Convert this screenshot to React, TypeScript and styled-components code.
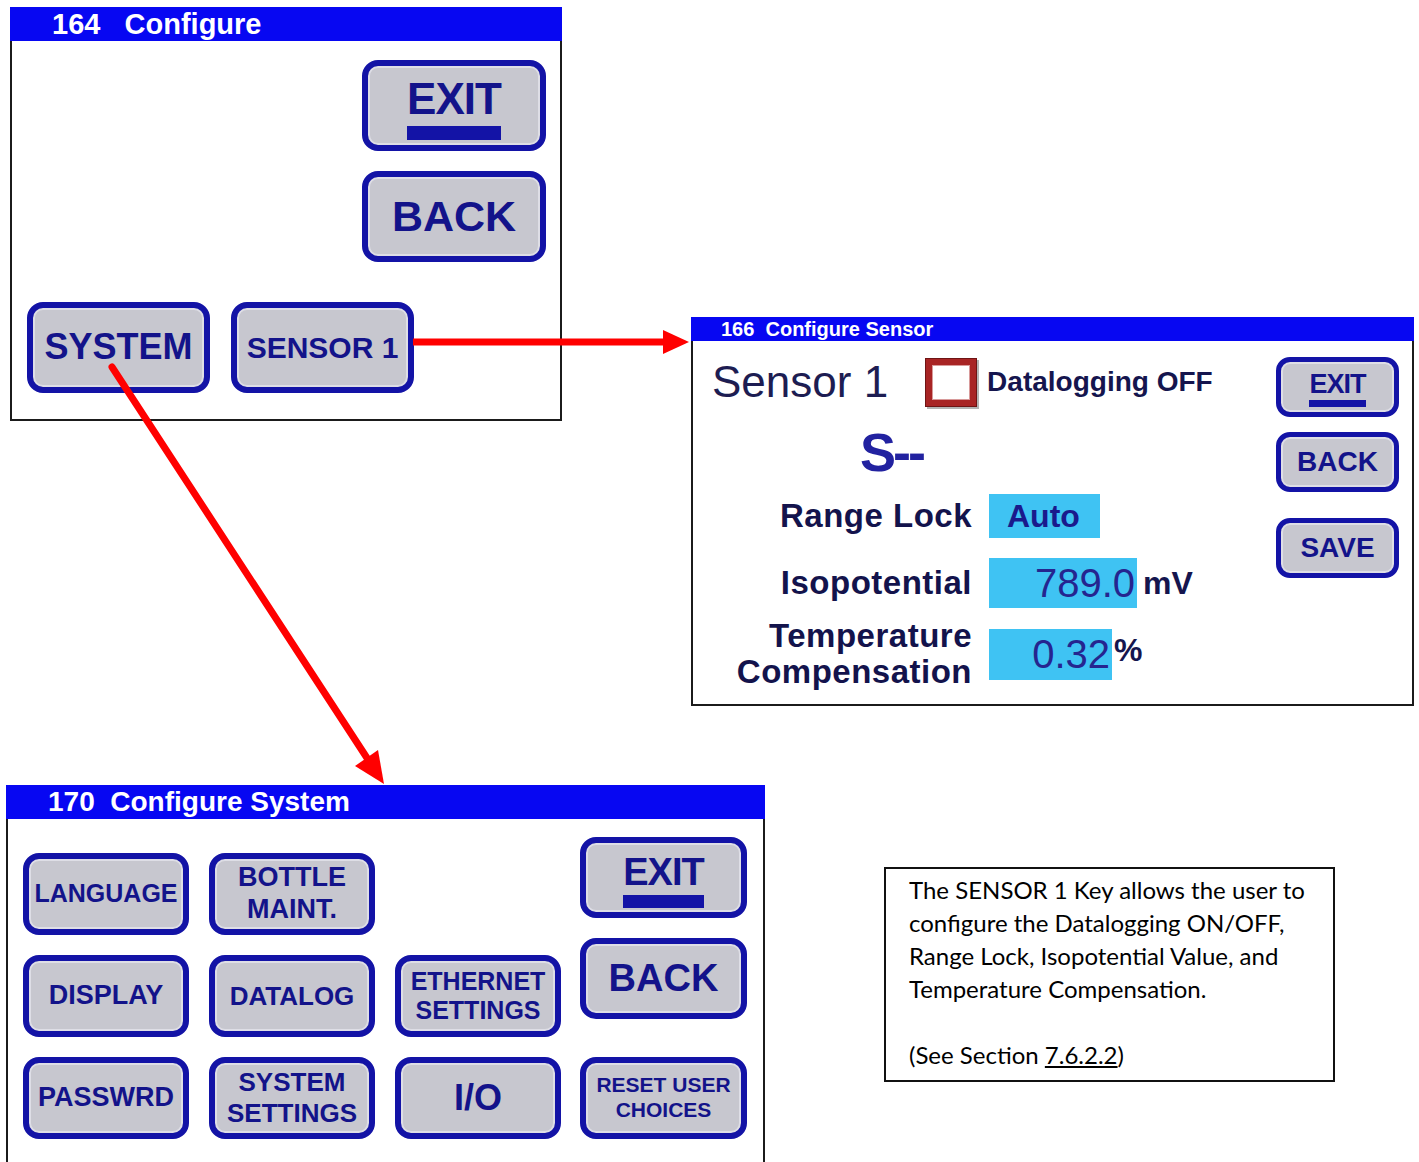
import React from 'react';
import styled, { createGlobalStyle } from 'styled-components';

const GlobalStyle = createGlobalStyle`
  html, body {
    margin: 0;
    padding: 0;
    background: #fff;
    overflow: hidden;
  }
  * {
    box-sizing: border-box;
  }
`;

const Canvas = styled.div`
  position: relative;
  width: 1419px;
  height: 1162px;
  overflow: hidden;
  background: #fff;
  font-family: "Liberation Sans", Arial, sans-serif;
`;

interface PlaceProps {
  $x: number;
  $y: number;
  $w: number;
  $h: number;
}

// each screen is a node of the diagram, so it sits at its own spot on the canvas
const Screen = styled.section<PlaceProps>`
  position: absolute;
  left: ${(p) => p.$x}px;
  top: ${(p) => p.$y}px;
  width: ${(p) => p.$w}px;
  height: ${(p) => p.$h}px;
  border: 2px solid #1b1b1b;
  background: #fff;
  display: flex;
  flex-direction: column;
`;

interface TitleProps {
  $h: number;
  $fs: number;
  $pl: number;
}

const TitleBar = styled.header<TitleProps>`
  flex: none;
  height: ${(p) => p.$h}px;
  margin: -2px -2px 0;
  padding-left: ${(p) => p.$pl}px;
  background: #0707f2;
  color: #fff;
  font-weight: bold;
  font-size: ${(p) => p.$fs}px;
  line-height: ${(p) => p.$h}px;
  white-space: pre;
`;

interface KeyProps {
  $w: number;
  $h: number;
  $fs: number;
  $bw?: number;
  $r?: number;
}

const Key = styled.div<KeyProps>`
  flex: none;
  width: ${(p) => p.$w}px;
  height: ${(p) => p.$h}px;
  border: ${(p) => p.$bw ?? 6}px solid #1313a6;
  border-radius: ${(p) => p.$r ?? 16}px;
  background: #c7c7cf;
  box-shadow: inset 0 0 0 2px #dedee6;
  display: flex;
  flex-direction: column;
  align-items: center;
  justify-content: center;
  color: #13138a;
  font-weight: bold;
  font-size: ${(p) => p.$fs}px;
  line-height: 1.18;
  text-align: center;
  white-space: pre-line;
`;

interface ExitProps {
  $bar: number;
  $gap: number;
  $shift?: number;
}

const ExitLabel = styled.span<ExitProps>`
  display: inline-flex;
  flex-direction: column;
  align-items: stretch;
  line-height: 1;
  letter-spacing: -1px;
  margin-top: ${(p) => (p.$shift ?? 0) * 2}px;

  &::after {
    content: '';
    height: ${(p) => p.$bar}px;
    margin-top: ${(p) => p.$gap}px;
    background: #1313a6;
  }
`;

/* ---------- 164 Configure ---------- */

const ConfigureBody = styled.div`
  flex: 1;
  display: flex;
  flex-direction: column;
  padding: 19px 14px 26px 15px;
`;

const RightRow = styled.div<{ $mt?: number }>`
  display: flex;
  justify-content: flex-end;
  margin-top: ${(p) => p.$mt ?? 0}px;
`;

const BottomRow = styled.div`
  display: flex;
  gap: 21px;
  margin-top: auto;
`;

/* ---------- 166 Configure Sensor ---------- */

const SensorBody = styled.div`
  flex: 1;
  display: flex;
  padding: 16px 13px 0 19px;
`;

const SensorMain = styled.div`
  flex: 1;
  display: flex;
  flex-direction: column;
`;

const HeaderRow = styled.div`
  display: flex;
  align-items: center;
  height: 50px;
`;

const SensorName = styled.div`
  font-size: 44px;
  line-height: 1;
  color: #1d1d52;
`;

const CheckBox = styled.div`
  width: 50px;
  height: 47px;
  margin-left: 38px;
  border: 6px solid #a82424;
  background: #fff;
  box-shadow: inset 0 0 0 1px #d89a9a, 0 0 0 1px #6e1414, 2px 2px 0 1px #b4b4b4;
`;

const DatalogText = styled.div`
  margin-left: 11px;
  font-size: 28px;
  font-weight: bold;
  color: #15154e;
`;

const BigCode = styled.div`
  margin: 22px 0 0 148px;
  height: 46px;
  font-size: 54px;
  line-height: 46px;
  font-weight: bold;
  letter-spacing: -3px;
  color: #2222a0;
`;

const FieldRow = styled.div<{ $mt: number }>`
  display: grid;
  grid-template-columns: 260px auto;
  column-gap: 17px;
  align-items: center;
  margin-top: ${(p) => p.$mt}px;
`;

const FieldLabel = styled.div`
  text-align: right;
  font-size: 33px;
  line-height: 36px;
  letter-spacing: 0.5px;
  font-weight: bold;
  color: #13134c;
`;

const ValueWrap = styled.div`
  display: flex;
  align-items: center;
`;

interface ValueProps {
  $w: number;
  $h: number;
  $bold?: boolean;
  $left?: boolean;
}

const ValueBox = styled.div<ValueProps>`
  width: ${(p) => p.$w}px;
  height: ${(p) => p.$h}px;
  padding: ${(p) => (p.$left ? '0 0 0 18px' : '0 2px 0 0')};
  background: #3fc3f3;
  text-align: ${(p) => (p.$left ? 'left' : 'right')};
  font-size: ${(p) => (p.$bold ? 32 : 40)}px;
  font-weight: ${(p) => (p.$bold ? 'bold' : 'normal')};
  line-height: ${(p) => p.$h}px;
  color: ${(p) => (p.$bold ? '#1a1a8c' : '#25258f')};
`;

const Unit = styled.span<{ $raise?: number; $ml?: number }>`
  margin: 0 0 ${(p) => p.$raise ?? 0}px ${(p) => p.$ml ?? 6}px;
  font-size: 32px;
  font-weight: bold;
  color: #15154e;
`;

const SideKeys = styled.div`
  display: flex;
  flex-direction: column;
`;

const SideGap = styled.div<{ $h: number }>`
  height: ${(p) => p.$h}px;
`;

/* ---------- 170 Configure System ---------- */

const SystemBody = styled.div`
  flex: 1;
  display: flex;
  padding-left: 15px;
`;

const SystemGrid = styled.div`
  display: grid;
  grid-template-columns: repeat(3, 166px);
  grid-auto-rows: 82px;
  column-gap: 20px;
  row-gap: 20px;
  padding-top: 34px;
`;

const SystemSide = styled.div`
  display: flex;
  flex-direction: column;
  margin-left: 19px;
  padding-top: 18px;
`;

/* ---------- note + arrows ---------- */

const Note = styled.div<PlaceProps>`
  position: absolute;
  left: ${(p) => p.$x}px;
  top: ${(p) => p.$y}px;
  width: ${(p) => p.$w}px;
  height: ${(p) => p.$h}px;
  border: 2px solid #111;
  padding: 4px 0 0 23px;
  font-family: Lato, "Open Sans", sans-serif;
  font-size: 24px;
  line-height: 33px;
  color: #000;
`;

const Ref = styled.span`
  text-decoration: underline;
`;

const Arrows = styled.svg`
  position: absolute;
  left: 0;
  top: 0;
  z-index: 5;
  pointer-events: none;
`;

const systemKeys = [
  'LANGUAGE',
  'BOTTLE\nMAINT.',
  '',
  'DISPLAY',
  'DATALOG',
  'ETHERNET\nSETTINGS',
  'PASSWRD',
  'SYSTEM\nSETTINGS',
  'I/O',
];

const keySize: Record<string, number> = {
  LANGUAGE: 25,
  'BOTTLE\nMAINT.': 27,
  DISPLAY: 27,
  DATALOG: 26,
  'ETHERNET\nSETTINGS': 25,
  PASSWRD: 27,
  'SYSTEM\nSETTINGS': 26,
  'I/O': 36,
};

export default function App() {
  return (
    <Canvas>
      <GlobalStyle />

      <Screen $x={10} $y={7} $w={552} $h={414}>
        <TitleBar $h={34} $fs={29} $pl={42}>
          {'164   Configure'}
        </TitleBar>
        <ConfigureBody>
          <RightRow>
            <Key $w={184} $h={91} $fs={44}>
              <ExitLabel $bar={14} $gap={5} $shift={3}>
                EXIT
              </ExitLabel>
            </Key>
          </RightRow>
          <RightRow $mt={20}>
            <Key $w={184} $h={91} $fs={43}>
              BACK
            </Key>
          </RightRow>
          <BottomRow>
            <Key $w={183} $h={91} $fs={36}>
              SYSTEM
            </Key>
            <Key $w={183} $h={91} $fs={30}>
              SENSOR 1
            </Key>
          </BottomRow>
        </ConfigureBody>
      </Screen>

      <Screen $x={691} $y={317} $w={723} $h={389}>
        <TitleBar $h={24} $fs={20} $pl={30}>
          {'166  Configure Sensor'}
        </TitleBar>
        <SensorBody>
          <SensorMain>
            <HeaderRow>
              <SensorName>Sensor 1</SensorName>
              <CheckBox />
              <DatalogText>Datalogging OFF</DatalogText>
            </HeaderRow>
            <BigCode>S--</BigCode>
            <FieldRow $mt={19}>
              <FieldLabel>Range Lock</FieldLabel>
              <ValueWrap>
                <ValueBox $w={111} $h={44} $bold $left>
                  Auto
                </ValueBox>
              </ValueWrap>
            </FieldRow>
            <FieldRow $mt={20}>
              <FieldLabel>Isopotential</FieldLabel>
              <ValueWrap>
                <ValueBox $w={148} $h={50}>
                  789.0
                </ValueBox>
                <Unit>mV</Unit>
              </ValueWrap>
            </FieldRow>
            <FieldRow $mt={10}>
              <FieldLabel>
                Temperature
                <br />
                Compensation
              </FieldLabel>
              <ValueWrap>
                <ValueBox $w={123} $h={51}>
                  0.32
                </ValueBox>
                <Unit $raise={8} $ml={2}>
                  %
                </Unit>
              </ValueWrap>
            </FieldRow>
          </SensorMain>
          <SideKeys>
            <Key $w={123} $h={60} $fs={27} $bw={5} $r={14}>
              <ExitLabel $bar={7} $gap={2} $shift={2}>
                EXIT
              </ExitLabel>
            </Key>
            <SideGap $h={15} />
            <Key $w={123} $h={60} $fs={28} $bw={5} $r={14}>
              BACK
            </Key>
            <SideGap $h={26} />
            <Key $w={123} $h={60} $fs={28} $bw={5} $r={14}>
              SAVE
            </Key>
          </SideKeys>
        </SensorBody>
      </Screen>

      <Screen $x={6} $y={785} $w={759} $h={400}>
        <TitleBar $h={34} $fs={28} $pl={42}>
          {'170  Configure System'}
        </TitleBar>
        <SystemBody>
          <SystemGrid>
            {systemKeys.map((label, i) =>
              label ? (
                <Key key={i} $w={166} $h={82} $fs={keySize[label]}>
                  {label}
                </Key>
              ) : (
                <span key={i} />
              )
            )}
          </SystemGrid>
          <SystemSide>
            <Key $w={167} $h={81} $fs={38}>
              <ExitLabel $bar={13} $gap={4} $shift={3}>
                EXIT
              </ExitLabel>
            </Key>
            <SideGap $h={20} />
            <Key $w={167} $h={81} $fs={38}>
              BACK
            </Key>
            <SideGap $h={38} />
            <Key $w={167} $h={82} $fs={21}>
              {'RESET USER\nCHOICES'}
            </Key>
          </SystemSide>
        </SystemBody>
      </Screen>

      <Note $x={884} $y={867} $w={451} $h={215}>
        The SENSOR 1 Key allows the user to
        <br />
        configure the Datalogging ON/OFF,
        <br />
        Range Lock, Isopotential Value, and
        <br />
        Temperature Compensation.
        <br />
        <br />
        (See Section <Ref>7.6.2.2</Ref>)
      </Note>

      <Arrows width={1419} height={1162} viewBox="0 0 1419 1162">
        <line x1={413} y1={342} x2={665} y2={342} stroke="#ff0000" strokeWidth={7} />
        <polygon points="663,330 689,342 663,354" fill="#ff0000" />
        <line
          x1={112}
          y1={367}
          x2={367}
          y2={758}
          stroke="#ff0000"
          strokeWidth={7}
          strokeLinecap="round"
        />
        <polygon points="355,766 384,784 378,750" fill="#ff0000" />
      </Arrows>
    </Canvas>
  );
}
